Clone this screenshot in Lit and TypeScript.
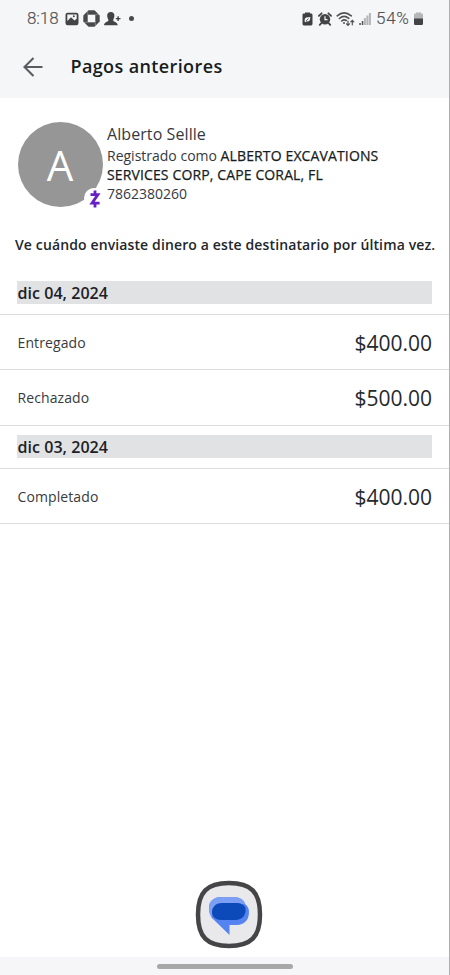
import { LitElement, html, css } from "lit";
import { customElement, property } from "lit/decorators.js";

interface Payment { status: string; amount: string }
interface Group { date: string; payments: Payment[] }

const groups: Group[] = [
  { date: "dic 04, 2024", payments: [
    { status: "Entregado", amount: "$400.00" },
    { status: "Rechazado", amount: "$500.00" },
  ] },
  { date: "dic 03, 2024", payments: [{ status: "Completado", amount: "$400.00" }] },
];

@customElement("status-bar")
class StatusBar extends LitElement {
  static styles = css`
    :host { display: flex; justify-content: space-between; align-items: center; height: 38px; padding: 0 26px 0 27px; color: #505153; font: 300 17px/37px Roboto, sans-serif; -webkit-text-stroke: 0.15px #505153; }
    .side { display: flex; align-items: center; height: 37px; }
    :host { align-items: flex-start; }
    svg { display: block; flex: none; }
    .time { width: 38px; letter-spacing: -0.1px; }
    .pct { width: 35px; margin-left: 5px; margin-right: 1px; letter-spacing: 0.7px; }
    .chase { margin-left: 4px; }
    .person { margin-left: 4px; }
    .dot { width: 5px; height: 5px; border-radius: 50%; background: #48494b; margin-left: 8px; }
    .alarm { margin-left: 5px; }
    .wifi { margin-left: 4px; }
    .signal { margin-left: 4px; }
    .battery { margin-left: 2px; }
  `;
  render() {
    return html`
      <div class="side">
        <span class="time">8:18</span>
        <svg width="14" height="14" viewBox="0 0 14 14"><rect x=".5" y=".7" width="13" height="12.6" rx="2.2" fill="#434446"/><path d="M2.3 2.5h9.4v4.2L9.5 8.6 6 5.3 2.3 8.9z" fill="#f5f6f8"/><circle cx="8.8" cy="4.3" r="1" fill="#434446"/></svg>
        <svg class="chase" width="17" height="17" viewBox="0 0 17 17"><path d="M5.500.3h6l5.200 5.200v6l-5.200 5.200h-6L.3 11.500v-6z" fill="#48494b"/><path d="M4.700 4.700h7.600v7.600H4.700z" fill="#f5f6f8"/><path d="M4.700.8v3.900M16.200 4.700h-3.900M12.300 16.200v-3.900M.8 12.300h3.900" stroke="#a5a6a8" stroke-width=".6"/></svg>
        <svg class="person" width="17" height="16" viewBox="0 0 17 16" fill="#434446"><path d="M6.800 1C9.400 1 10.700 2.800 10.400 5.200 10.200 7.300 9.300 8 9.200 9.400c.1 1.200 4.400 1.400 4.600 4.900H0c.2-3.500 4.300-3.700 4.400-4.900C4.300 8 3.400 7.300 3.200 5.200 2.900 2.800 4.200 1 6.800 1z"/><path d="M11.800 6.900h1.600V5.200h1.400v1.700h1.700v1.400h-1.700V10h-1.400V8.300h-1.600z"/></svg>
        <span class="dot"></span>
      </div>
      <div class="side">
        <svg width="11" height="14" viewBox="0 0 11 14"><path d="M3 1.500V.500h5v1h1.200q1.300 0 1.300 1.400v8.900q0 1.700-1.400 1.700H1.900Q.5 13.500.5 11.800V2.900q0-1.400 1.300-1.400z" fill="#3f4042"/><path d="M2.700 10V7.300Q3.200 5 8.300 5q.2 4.700-3.200 4.600l-1.200-.2-.6.800z" fill="#f5f6f8"/><path d="M4 9l2.600-2.500" stroke="#3f4042" stroke-width=".8"/></svg>
        <svg class="alarm" width="14" height="14" viewBox="0 0 14 14"><circle cx="7" cy="7.300" r="5.200" fill="#434446"/><path d="M.9 3.800 3.600 1.300M13.100 3.800 10.400 1.300M3.300 11.200l-1.500 1.700M10.700 11.200l1.500 1.700" stroke="#434446" stroke-width="1.800" stroke-linecap="round"/><path d="M7 4.300v3.300h2.500" fill="none" stroke="#f5f6f8" stroke-width="1.200"/></svg>
        <svg class="wifi" width="19" height="16" viewBox="0 0 19 16" fill="none" stroke="#505153" stroke-width="1.600" stroke-linecap="round"><path d="M1.200 4.800Q8 -1.100 15.300 4.800M3.400 7.500Q8 3.500 12.800 7.300M5.700 10Q8 8 10.300 9.500"/><circle cx="8" cy="12" r="1" fill="#505153" stroke="none"/><path d="M12 10v4.300m-1.500-1.500 1.500 1.600 1.500-1.600M16.300 13.800V9.300m-1.500 1.600 1.500-1.600 1.500 1.600" stroke-width="1.200"/></svg>
        <svg class="signal" width="12" height="14" viewBox="0 0 12 14"><path d="M.3 11h1.500v2H.3zM2.800 9h1.500v4H2.800z" fill="#505153"/><path d="M4.900 6h2v7h-2zM7.400 3.500h2V13h-2zM9.900 1h2v12h-2z" fill="#b4b5b7"/></svg>
        <span class="pct">54%</span>
        <svg class="battery" width="9" height="14" viewBox="0 0 9 14"><path d="M0 7V2.600Q0 1.500 1.200 1.500H2V.500h5v1h.8Q9 1.500 9 2.600V7z" fill="#b5b6b8"/><path d="M0 6.500h9v5.300q0 1.300-1.300 1.300H1.300Q0 13.100 0 11.800z" fill="#434446"/></svg>
      </div>`;
  }
}

@customElement("payment-group")
class PaymentGroup extends LitElement {
  @property({ attribute: false }) group!: Group;
  static styles = css`
    :host { display: block; }
    .head { padding: 9.300px 17px 10px; border-bottom: 1px solid #dcddde; }
    .date { height: 23px; background: #e1e2e4; font: 600 16px/24px "Open Sans", sans-serif; color: #1c2126; text-indent: 0.5px; letter-spacing: 0.05px; }
    .row { display: flex; justify-content: space-between; align-items: center; height: 54.300px; padding: 0 17px; border-bottom: 1px solid #dcddde; }
    .status { font-size: 14px; letter-spacing: 0.1px; text-indent: 0.5px; color: #373b40; }
    .amount { font-size: 21px; padding-top: 2px; color: #24292e; }
  `;
  render() {
    return html`
      <div class="head"><div class="date">${this.group.date}</div></div>
      ${this.group.payments.map((p) => html`<div class="row"><span class="status">${p.status}</span><span class="amount">${p.amount}</span></div>`)}`;
  }
}

@customElement("app-root")
class AppRoot extends LitElement {
  static styles = css`
    :host { display: flex; flex-direction: column; position: relative; box-sizing: border-box; width: 450px; height: 975px; overflow: hidden; background: #fff; border-right: 1px solid #adaeb0; font-family: "Open Sans", sans-serif; color: #22272c; }
    header { height: 98px; background: #f5f6f8; flex: none; }
    .title { display: flex; align-items: center; height: 57px; padding-left: 23px; font-size: 18px; line-height: 25px; font-weight: 600; letter-spacing: 0.380px; color: #171c21; }
    .title svg { margin-right: 27.500px; }
    .contact { display: flex; height: 86px; margin: 24px 0 0 17px; }
    .avatar { position: relative; flex: none; width: 85px; height: 85px; margin: 0 0 0 0.500px; border-radius: 50%; background: #969696; color: #fff; font-size: 42px; line-height: 85px; text-align: center; }
    .zelle { position: absolute; right: -1px; bottom: -1px; width: 20px; height: 20px; background: #fff; border-radius: 50%; }
    .zelle svg { display: block; margin: 1.500px 0 0 4px; }
    .info { margin-left: 4.500px; padding-top: 1px; font-size: 14px; line-height: 19px; color: #34393e; }
    .name { font-size: 16px; line-height: 23px; letter-spacing: 0.080px; }
    .legal { white-space: nowrap; }
    .legal b { font-weight: 500; letter-spacing: 0.130px; color: #171c21; -webkit-text-stroke: 0.250px #171c21; }
    .note { margin: 26px 0 15.700px 15px; height: 22px; line-height: 22px; font-size: 14px; font-weight: 600; letter-spacing: 0.125px; white-space: nowrap; }
    .app { position: absolute; left: 190px; top: 876px; }
    .nav { margin-top: auto; height: 18px; display: flex; justify-content: center; align-items: center; background: #f6f6f8; }
    .handle { width: 136px; height: 5px; border-radius: 3px; background: #a8a8a9; }
  `;
  render() {
    return html`
      <header>
        <status-bar></status-bar>
        <div class="title">
          <svg width="20" height="20" viewBox="0 0 20 20" fill="none" stroke="#5a5c5f" stroke-width="2.100"><path d="M19.500 10H2M10.500 1 1.500 10l9 9"/></svg>
          <span>Pagos anteriores</span>
        </div>
      </header>
      <section class="contact">
        <div class="avatar">A<span class="zelle"><svg width="14" height="18" viewBox="0 0 14 18" fill="none" stroke="#6720c4" stroke-width="2.800"><path d="M2.500 4.600h7.400L4 13.200h7.600M7 .5v4M7 13.400v4"/></svg></span></div>
        <div class="info">
          <div class="name">Alberto Sellle</div>
          <div class="legal">Registrado como <b>ALBERTO EXCAVATIONS</b></div>
          <div class="legal"><b>SERVICES CORP, CAPE CORAL, FL</b></div>
          <div>7862380260</div>
        </div>
      </section>
      <div class="note">Ve cuándo enviaste dinero a este destinatario por última vez.</div>
      ${groups.map((g) => html`<payment-group .group=${g}></payment-group>`)}
      <svg class="app" width="78" height="78" viewBox="0 0 78 78">
        <path d="M39 7C61 7 70 16 70 38.500S61 70 39 70 8 61 8 38.500 17 7 39 7z" fill="#e9e9eb" stroke="#454547" stroke-width="4.500"/>
        <path d="M31 21h12c7 0 11 3 12 7 3 2 4 5 4 8 0 8-5 13-12 13h-7.500v10L22 42c-2-3-3-6-3-10 0-7 5-11 12-11z" fill="#5584f2"/>
        <path d="M31 21h12c7 0 11 3 12 7H33c-6 0-11 4-11 11v3c-2-3-3-6-3-10 0-7 5-11 12-11z" fill="#7c9ff5"/>
        <path d="M32 27h14c5 0 9 2 9.500 5.500 1 6-3 11.500-10 11.500H31c-5 0-8.500-3-9-7-.4-5 3-10 10-10z" fill="#0b4ab8"/>
      </svg>
      <div class="nav"><div class="handle"></div></div>`;
  }
}
